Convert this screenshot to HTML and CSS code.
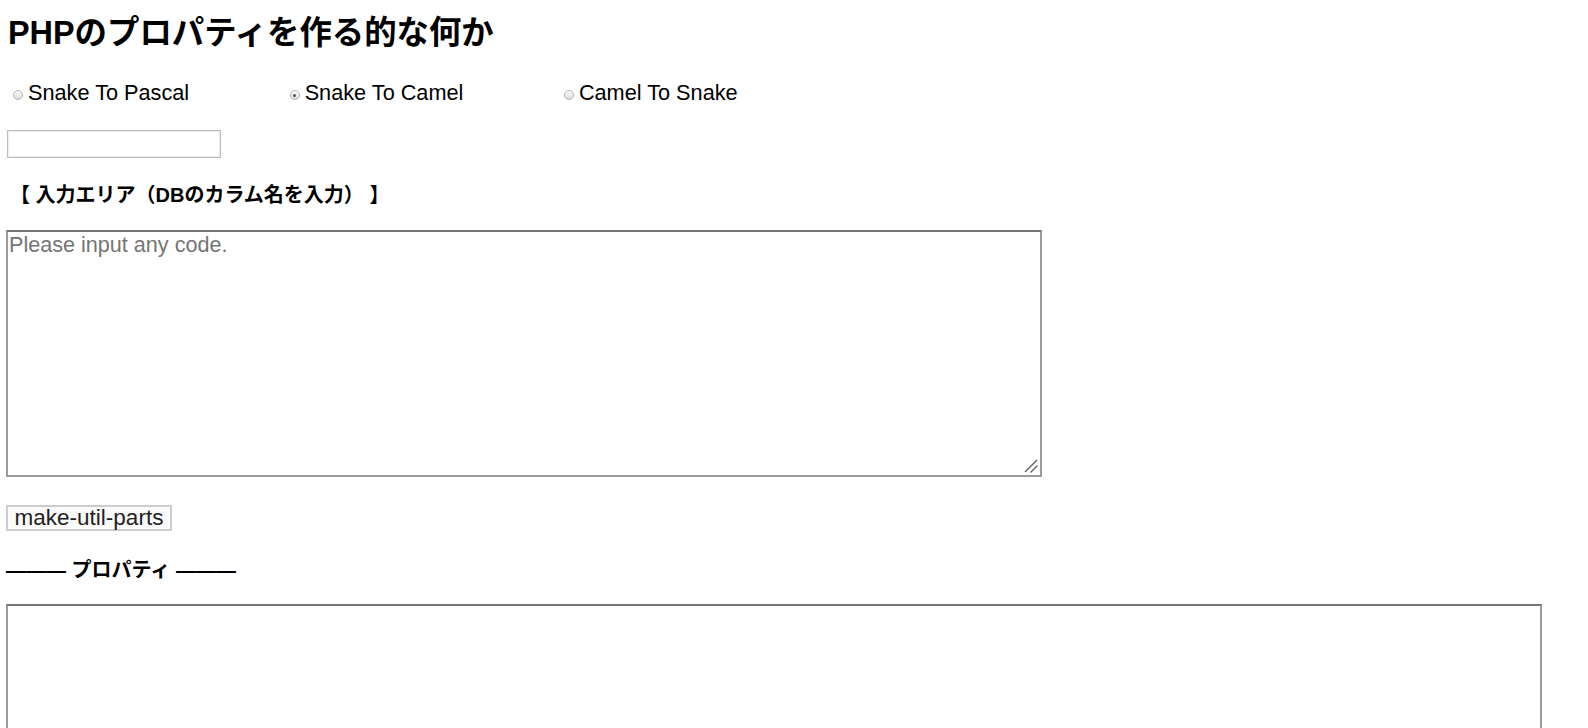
FILE: index.html
```html
<!DOCTYPE html>
<html lang="ja">
<head>
<meta charset="utf-8">
<title>PHPのプロパティを作る的な何か</title>
<link rel="stylesheet" href="styles.css">
</head>
<body>
<div class="page">
  <h1 class="title">PHPのプロパティを作る的な何か</h1>
  <div class="modes">
    <label class="mode"><input type="radio" name="mode" class="radio"><span>Snake To Pascal</span></label>
    <label class="mode"><input type="radio" name="mode" class="radio" checked><span>Snake To Camel</span></label>
    <label class="mode"><input type="radio" name="mode" class="radio"><span>Camel To Snake</span></label>
  </div>
  <input type="text" class="text-input">
  <h4 class="section-label">【 入力エリア（DBのカラム名を入力） 】</h4>
  <div class="area-wrap">
    <textarea class="code-in" placeholder="Please input any code."></textarea>
    <svg class="grip" width="16" height="16" viewBox="0 0 16 16" aria-hidden="true">
      <line x1="2" y1="14" x2="14" y2="2" stroke="#5a5a5a" stroke-width="1.3"/>
      <line x1="7.5" y1="14.5" x2="14.5" y2="7.5" stroke="#5a5a5a" stroke-width="1.3"/>
    </svg>
  </div>
  <button class="make-btn" type="button">make-util-parts</button>
  <h4 class="section-label out-label">——— プロパティ ———</h4>
  <textarea class="code-out"></textarea>
</div>
</body>
</html>
```
FILE: styles.css
```css
html, body {
  margin: 0;
  padding: 0;
  background: #ffffff;
}
body {
  font-family: "Liberation Sans", "Noto Sans CJK JP", sans-serif;
  color: #000;
  overflow: hidden;
}
.page {
  padding: 10px 0 0 8px;
  display: flex;
  flex-direction: column;
  align-items: flex-start;
}
.title {
  margin: 0;
  font-size: 32.4px;
  line-height: 46px;
  font-weight: bold;
}
.modes {
  margin-top: 25px;
  display: flex;
  align-items: center;
  height: 24px;
}
.mode {
  display: flex;
  align-items: center;
  font-size: 21.7px;
  line-height: 24px;
  margin-right: 95.5px;
}
.radio {
  appearance: none;
  -webkit-appearance: none;
  width: 10px;
  height: 10px;
  margin: 4px 5px 0 5px;
  border: 1px solid #b4b4b4;
  border-radius: 50%;
  background: linear-gradient(#fdfdfd, #dcdcdc);
  box-sizing: border-box;
  position: relative;
  flex: none;
}
.radio:checked::after {
  content: "";
  position: absolute;
  left: 2.5px;
  top: 2.5px;
  width: 3px;
  height: 3px;
  border-radius: 50%;
  background: #555;
}
.text-input {
  margin: 25px 0 0 -1px;
  width: 214px;
  height: 28px;
  box-sizing: border-box;
  border: 1px solid #bdbdbd;
  box-shadow: inset 0 0 0 1px #ececec;
  font-size: 16px;
  padding: 0 4px;
}
.section-label {
  margin: 23px 0 0 2px;
  font-size: 20px;
  line-height: 28px;
  font-weight: bold;
}
.area-wrap {
  position: relative;
  margin: 21px 0 0 -2px;
  display: flex;
}
.code-in {
  width: 1036px;
  height: 247px;
  margin: 0;
  box-sizing: border-box;
  border: 2px solid #9a9a9a;
  border-top-color: #747474;
  padding: 1px 1px;
  font-family: "Liberation Sans", "Noto Sans CJK JP", sans-serif;
  font-size: 21.6px;
  line-height: 24px;
  color: #000;
  resize: none;
}
.code-in::placeholder {
  color: #757575;
}
.grip {
  position: absolute;
  right: 3px;
  bottom: 3px;
}
.make-btn {
  margin: 28px 0 0 -2px;
  height: 26px;
  width: 166px;
  box-sizing: border-box;
  border: 2px solid #cdcdcd;
  background: #fbfbfb;
  color: #222;
  font-family: "Liberation Sans", sans-serif;
  font-size: 22.5px;
  line-height: 20px;
  padding: 0;
}
.out-label {
  margin: 25px 0 0 -2px;
}
.code-out {
  margin: 20px 0 0 -2px;
  width: 1536px;
  height: 200px;
  box-sizing: border-box;
  border: 2px solid #9a9a9a;
  border-top-color: #747474;
  resize: none;
}
```
